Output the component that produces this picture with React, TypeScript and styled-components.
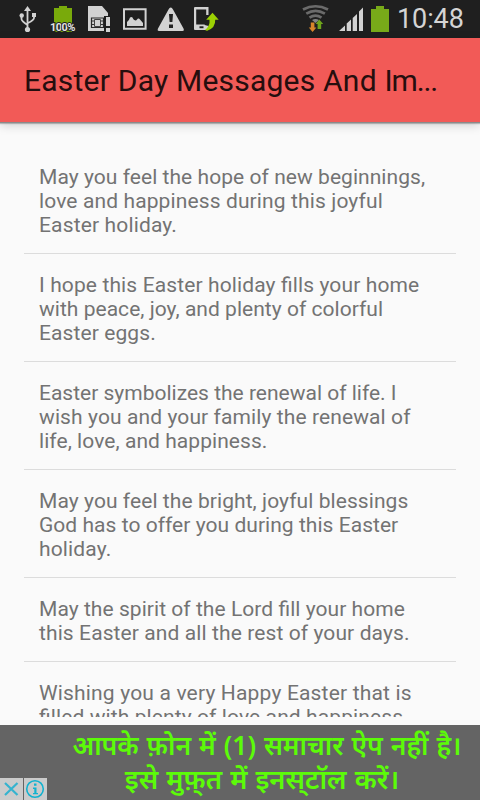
import React from "react";
import styled, { createGlobalStyle } from "styled-components";

const GlobalStyle = createGlobalStyle`
  * { box-sizing: border-box; }
  body { margin: 0; background: #fafafa; }
`;

const Screen = styled.div`
  width: 480px;
  height: 800px;
  display: flex;
  flex-direction: column;
  overflow: hidden;
  background: #fafafa;
  font-family: Roboto, "Liberation Sans", sans-serif;
`;

const StatusBar = styled.header`
  height: 38px;
  flex: none;
  display: flex;
  justify-content: space-between;
  background: #1f1f1f;
`;

const StatusIcons = styled.svg`
  display: block;
  height: 38px;
`;

const StatusRight = styled.div`
  display: flex;
`;

const Clock = styled.time`
  width: 90px;
  padding: 1px 0 0 7px;
  font-size: 27px;
  line-height: 37px;
  letter-spacing: -0.1px;
  color: #d4d4d4;
  white-space: nowrap;
`;

const AppBar = styled.div`
  height: 84px;
  flex: none;
  padding-left: 24px;
  background: #f25a57;
  box-shadow: 0 1px 0 #8a8a8a, 0 2px 1px rgba(0, 0, 0, 0.22), 0 3px 10px rgba(0, 0, 0, 0.18);
  z-index: 1;
`;

const Title = styled.h1`
  margin: 0;
  font-size: 30px;
  font-weight: 400;
  line-height: 85px;
  letter-spacing: 0.22px;
  color: #260e0e;
  white-space: nowrap;
`;

const TitleEnd = styled.span`
  letter-spacing: -1.1px;
`;

const List = styled.ul`
  height: 571px;
  flex: none;
  margin: 24px 24px 8px;
  padding: 0;
  list-style: none;
  overflow: hidden;
`;

const Message = styled.li`
  padding: 19px 15px 16px;
  border-bottom: 1px solid #dcdcdc;
  color: #737373;
  font-size: 21px;
  line-height: 24px;
`;

const Line = styled.span<{ $track: number }>`
  display: block;
  white-space: nowrap;
  font-feature-settings: "liga" 1;
  letter-spacing: ${(p) => p.$track}px;
`;

const AdBanner = styled.footer`
  height: 75px;
  flex: none;
  display: flex;
  align-items: flex-end;
  background: #646464;
`;

const AdControls = styled.div`
  width: 47px;
  height: 22px;
  flex: none;
  display: flex;
  gap: 1px;
`;

const AdButton = styled.span`
  width: 23px;
  height: 22px;
  display: flex;
  align-items: center;
  justify-content: center;
  background: #cbcbcb;
`;

const AdCopy = styled.div`
  flex: 1;
  align-self: flex-start;
  display: flex;
  flex-direction: column;
  align-items: center;
  padding: 4px 0 0 7px;
  font-family: "Noto Sans", "Noto Sans Devanagari", sans-serif;
  font-weight: 600;
  color: #5cfb08;
`;

const AdLine = styled.div<{ $size: number; $gap: number; $inset?: number }>`
  height: 33px;
  padding-right: ${(p) => p.$inset ?? 0}px;
  font-size: ${(p) => p.$size}px;
  word-spacing: ${(p) => p.$gap}px;
  line-height: 33px;
  white-space: nowrap;
`;

type MessageLine = [string, number];

const messages: MessageLine[][] = [
  [["May you feel the hope of new beginnings,", 0.05], ["love and happiness during this joyful", 0.12], ["Easter holiday.", 0.15]],
  [["I hope this Easter holiday fills your home", 0.12], ["with peace, joy, and plenty of colorful", 0.03], ["Easter eggs.", 0.1]],
  [["Easter symbolizes the renewal of life. I", 0], ["wish you and your family the renewal of", 0.1], ["life, love, and happiness.", 0.06]],
  [["May you feel the bright, joyful blessings", 0.07], ["God has to offer you during this Easter", 0.04], ["holiday.", 0.15]],
  [["May the spirit of the Lord fill your home", 0.05], ["this Easter and all the rest of your days.", 0.1]],
  [["Wishing you a very Happy Easter that is", 0.17], ["filled with plenty of love and happiness.", 0.1]],
];

const NotificationIcons = () => (
  <StatusIcons width="225" viewBox="0 0 225 38" aria-hidden="true">
    <g stroke="#d2d2d2" strokeWidth="1.8" fill="none">
      <path d="M27.5 9v21M21.500 16v3q0 2 6 6M34 15v3q0 2-6 5" />
    </g>
    <path d="M27.500 6l3.500 5h-7z" fill="#d2d2d2" />
    <circle cx="27.500" cy="29.500" r="2.600" fill="#d2d2d2" />
    <circle cx="21.700" cy="15.500" r="2.200" fill="#d2d2d2" />
    <path d="M32 13h4v4h-4z" fill="#d2d2d2" />
    <path d="M54 8h5V6h8v2h5v24H54z" fill="#79aa0b" />
    <text x="50" y="30.700" textLength="25.500" fontFamily="Roboto" fontWeight="700" fontSize="11" stroke="#222" strokeWidth="2" paintOrder="stroke" fill="#e4e4e4">100%</text>
    <path d="M88 6h14l6 7v3h-4v15H88z" fill="#d2d2d2" />
    <path d="M91.500 18h12v9.500h-12z" fill="none" stroke="#292929" strokeWidth="1.200" />
    <path d="M94.500 19.500h6v7h-6z" fill="none" stroke="#444" strokeWidth="1" />
    <path d="M92 21h2M92 24.500h2M101 21h2M101 24.500h2" stroke="#333" strokeWidth="1" />
    <path d="M104.500 16h6v16h-6z" fill="#1f1f1f" />
    <path d="M106 17h4v9h-4zM106 28h4v4h-4z" fill="#d2d2d2" />
    <path d="M124 9.200h21.600v19.600H124z" fill="none" stroke="#d2d2d2" strokeWidth="2" />
    <path d="M127 26v-4q2-1 3-4.500 1.500-1 2.500 0 1 3 3.500 3l2-2q1-.5 2 1l3 3.500v3z" fill="#d2d2d2" />
    <path d="M170.800 7.500q1.200 0 2.200 2l10.500 19q1 2.500-1 2.500h-23.500q-2 0-1-2.500l10.500-19q1-2 2.300-2z" fill="#d2d2d2" />
    <path d="M169 14h4l-.6 8h-2.800zM169 24.500h4V28h-4z" fill="#222" />
    <path d="M208.500 26v3q0 1-1 1h-12.500q-1 0-1-1v-21q0-1 1-1h13.500v8h-2.300v-5.500h-10v15h8.500v.500z" fill="#d2d2d2" />
    <path d="M199.500 26.300h4v1.900h-4z" fill="#1f1f1f" />
    <path d="M212.500 12.800l6.200 7h-3.500q.5 8-8 11-2 0-2-1 5-4 4.300-10h-3.300z" fill="#9bd003" />
  </StatusIcons>
);

const SystemIcons = () => (
  <StatusIcons width="90" viewBox="300 0 90 38" aria-hidden="true">
    <g fill="none" stroke="#6b6b6b" strokeWidth="2.700">
      <path d="M303 9.500q12.500-6.500 25 0M306.300 13.700q9.300-5.500 18.600 0M309.500 17.600q6-4 12 0" />
    </g>
    <path d="M312 20q3.500-2 7 0l-3.500 3z" fill="#858585" />
    <path d="M310.800 22.500h3.600v5h2l-3.800 4.500-3.800-4.500h2z" fill="#d9852a" />
    <path d="M319.300 19.500l3.900 4.500h-2v5h-3.600v-5h-2z" fill="#6fa51b" />
    <path d="M339 31l6-5.500V31zM346.700 31v-7.500l4.300-4V31zM352.700 31V18l4.300-4v17zM359 31V11.500l4-4V31z" fill="#d2d2d2" />
    <path d="M371 9h5V6h8v3h5v23h-18z" fill="#78aa19" />
  </StatusIcons>
);

export default function App() {
  return (
    <Screen>
      <GlobalStyle />
      <StatusBar>
        <NotificationIcons />
        <StatusRight>
          <SystemIcons />
          <Clock>10:48</Clock>
        </StatusRight>
      </StatusBar>
      <AppBar>
        <Title>Easter Day Messages And <TitleEnd>Im...</TitleEnd></Title>
      </AppBar>
      <List>
        {messages.map((lines, index) => (
          <Message key={index}>
            {lines.map(([text, track]) => (
              <Line key={text} $track={track}>{text}</Line>
            ))}
          </Message>
        ))}
      </List>
      <AdBanner>
        <AdControls>
          <AdButton>
            <svg width="23" height="22" viewBox="0 0 23 22"><path d="M5 5l12.500 12M17.500 5L5 17" stroke="#35b3cf" strokeWidth="2.200" /></svg>
          </AdButton>
          <AdButton>
            <svg width="23" height="22" viewBox="0 0 23 22">
              <circle cx="11" cy="11" r="8.300" fill="none" stroke="#12b2cf" strokeWidth="1.600" />
              <path d="M10 5.500h2.500v2.200H10zM9 9.500h3.500V15H14v1.300H9V15h1.300v-4H9z" fill="#12b2cf" />
            </svg>
          </AdButton>
        </AdControls>
        <AdCopy>
          <AdLine $size={26.5} $gap={1}>आपके फ़ोन में (1) समाचार ऐप नहीं है।</AdLine>
          <AdLine $size={27.3} $gap={1} $inset={10}>इसे मुफ़्‌त में इनस्‌टॉल करें।</AdLine>
        </AdCopy>
      </AdBanner>
    </Screen>
  );
}
